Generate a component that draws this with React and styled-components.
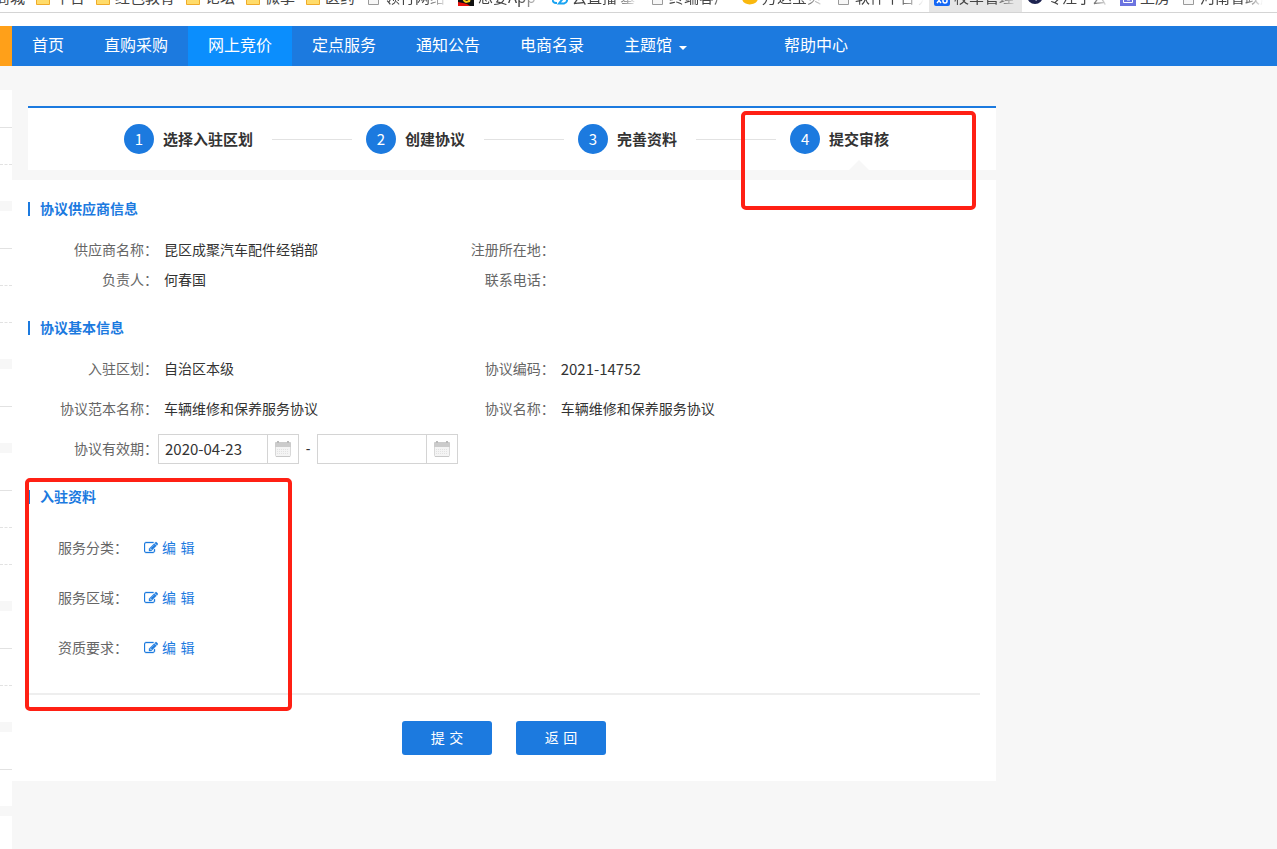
import React from 'react';
import styled, { createGlobalStyle, css } from 'styled-components';

const blue = '#1c7adf';
const grey = '#f7f7f7';
const cjk = '"Noto Sans CJK SC", sans-serif';

const GlobalStyle = createGlobalStyle`
  *, *::before, *::after { box-sizing: border-box; }
  body {
    margin: 0;
    background: ${grey};
    color: #333;
    font: 14px/20px "Liberation Sans", ${cjk};
  }
  button, input { font: inherit; color: inherit; }
`;

const Page = styled.div`
  display: flex;
  flex-direction: column;
  min-height: 100vh;
`;

/* Bookmarks */
const Bookmarks = styled.nav`
  display: flex;
  align-items: flex-end;
  height: 13px;
  overflow: hidden;
  background: #fff;
  border-bottom: 1px solid #d4d4d4;
`;
const Bookmark = styled.a`
  flex: none;
  display: flex;
  align-items: center;
  justify-content: flex-end;
  gap: 4px;
  width: ${p => (p.$cut ? '30px' : 'auto')};
  height: 30px;
  padding: 0 5px;
  color: #444;
  font: 15px/22px ${cjk};
  text-decoration: none;
  white-space: nowrap;
  background: ${p => (p.$on ? '#e6e6e6' : 'transparent')};
`;
const BookmarkText = styled.span`
  width: ${p => p.$w}px;
  overflow: hidden;
  white-space: nowrap;
  ${p => p.$w > 60 && css`mask-image: linear-gradient(to right, #000 42px, transparent);`}
`;

const bookmarks = [
  ['folder', '平台', 30],
  ['folder', '红色教育', 60],
  ['folder', '论坛', 30],
  ['folder', '微享', 30],
  ['folder', '医药', 30],
  ['page', '领行网络', 63],
  ['fire', '想要App', 64],
  ['cloud', '云直播 基', 67],
  ['page', '终端客户', 63],
  ['gold', '万达宝贝', 63],
  ['page', '软件平台 万', 69],
  ['school', '校车管理平', 63, true],
  ['globe', '专注于云', 63],
  ['house', '上房', 30],
  ['page', '河南省政府', 63],
];

const marks = {
  folder: <path d="M1.5 2.5h5l1.5 2h6.500v11h-13z" fill="#ffdc6b" stroke="#f0ab2a" />,
  page: <path d="M3.500 1.500h10v14h-10z" fill="#f7f7f7" stroke="#9a9a9a" />,
  fire: (
    <>
      <path d="M0 0h16v17H0z" fill="#111" />
      <path d="M0 13l5 1 4 1 3 2H0z" fill="#e8100c" />
      <path d="M4 10l5 2 4-3-1 4-4 1-2-1z" fill="#ffd21c" />
    </>
  ),
  cloud: (
    <path d="M5 14H4a3 3 0 0 1 0-7c1-5 8-5 9 0a4 4 0 0 1-1 7.500H7l4-5" fill="none" stroke="#1aa4f2" strokeWidth="2" />
  ),
  gold: <path d="M0 9h16c0 8-16 9-16 0z" fill="#f9b80e" />,
  school: (
    <>
      <rect width="16" height="17" rx="2" fill="#1467f5" />
      <path d="M3 14l4-5M3 9l4 5M9 8v4q0 2 2 2t2-2V8" fill="none" stroke="#fff" strokeWidth="1.500" />
    </>
  ),
  globe: (
    <>
      <circle cx="8" cy="7" r="8" fill="#1d2350" />
      <path d="M5 11l2-3m2 4l1-4" stroke="#c4c7dd" />
    </>
  ),
  house: (
    <>
      <path d="M0 0h16v17H0z" fill="#6c74e0" />
      <path d="M3.500 3.500h9v10h-9zM7 7v4h3V7z" fill="none" stroke="#fff" />
    </>
  ),
};

/* Site navigation */
const NavBar = styled.nav`
  display: flex;
  height: 40px;
  margin-top: 13px;
  background: ${blue};
  border-left: 12px solid #ffa019;
`;
const TopWhite = styled.header`
  display: flow-root;
  background: #fff;
`;
const NavLink = styled.a`
  display: flex;
  align-items: center;
  gap: 7px;
  padding: 0 20px;
  margin-left: ${p => (p.$apart ? 57 : 0)}px;
  background: ${p => (p.$on ? '#0b8efd' : 'transparent')};
  color: #fff;
  font-size: 16px;
  text-decoration: none;
  white-space: nowrap;
`;
const Caret = styled.span`
  border: 4px solid transparent;
  border-top-color: #fff;
  border-bottom: 0;
  margin-top: 3px;
`;

/* Left strip */
const Body = styled.div`
  display: flex;
  flex: 1;
`;
const Side = styled.aside`
  flex: none;
  display: flex;
  flex-direction: column;
  gap: 10px;
  width: 12px;
  padding-top: 24px;
`;
const SideGroup = styled.div`
  background: #fff;
  &:last-child { flex: 1; }
`;
const SideRow = styled.div`
  height: 37px;
  & + & { border-top: 1px dashed #e2e2e2; }
  &:first-child + & { border-top-style: solid; }
`;

/* Main */
const Main = styled.main`
  position: relative;
  flex: 1;
  max-width: 984px;
  padding-top: 40px;
`;
const Steps = styled.ol`
  display: flex;
  align-items: center;
  height: 64px;
  margin: 0 0 10px 16px;
  padding: 0 0 0 96px;
  list-style: none;
  background: #fff;
  border-top: 2px solid ${blue};
  font-family: ${cjk};
`;
const Step = styled.li`
  display: flex;
  align-items: center;
  gap: 9px;
  height: 100%;
  white-space: nowrap;
  &:not(:last-child)::after {
    content: '';
    width: 80px;
    height: 1px;
    margin: 0 14px 0 10px;
    background: #e2e2e2;
  }
`;
const StepNumber = styled.span`
  width: 30px;
  height: 30px;
  border-radius: 50%;
  background: ${blue};
  color: #fff;
  font-size: 15px;
  line-height: 30px;
  text-align: center;
`;
const StepName = styled.strong`
  position: relative;
  font-size: 15px;
  line-height: 62px;
  ${p => p.$on && css`
    &::after {
      content: '';
      position: absolute;
      left: 50%;
      bottom: 0;
      margin-left: -10px;
      border: 10px solid transparent;
      border-top: 0;
      border-bottom-color: ${grey};
    }
  `}
`;

const Panel = styled.form`
  padding: 19px 16px 26px;
  background: #fff;
`;
const Section = styled.section`
  & + & { margin-top: 23px; }
`;
const Title = styled.h2`
  display: flex;
  align-items: center;
  gap: 10px;
  margin: 0 0 ${p => p.$space || 16}px;
  color: ${blue};
  font-size: 14px;
  line-height: 20px;
  &::before {
    content: '';
    width: 2px;
    height: 14px;
    background: ${blue};
  }
`;
const Fields = styled.div`
  display: grid;
  grid-template-columns: 5fr 7fr;
  row-gap: ${p => p.$gap || 0}px;
`;
const Field = styled.div`
  display: flex;
  align-items: center;
  height: 30px;
  ${p => p.$wide && 'grid-column: 1 / -1;'}
`;
const Label = styled.label`
  width: 130px;
  color: #666;
  text-align: right;
`;
const Value = styled.output`
  padding-left: 6px;
  ${p => p.$code && css`
    font-family: ${cjk};
    font-size: 15px;
    line-height: 18px;
  `}
`;
const DateBox = styled.div`
  display: flex;
  width: 141px;
  height: 30px;
  border: 1px solid #d4d4d4;
`;
const DateInput = styled.input`
  flex: 1;
  min-width: 0;
  padding: 0 6px;
  border: 0;
  outline: 0;
  background: transparent;
  font-family: ${cjk};
  font-size: 15px;
`;
const DateButton = styled.button`
  display: flex;
  align-items: center;
  justify-content: center;
  width: 31px;
  padding: 0;
  border: 0;
  border-left: 1px solid #d4d4d4;
  background: #fff;
`;
const Dash = styled.span`
  width: 18px;
  text-align: center;
`;

const Materials = styled.ul`
  display: grid;
  gap: 20px;
  margin: 0;
  padding: 0 0 30px 30px;
  list-style: none;
  border-bottom: 2px solid #eee;
`;
const Material = styled.li`
  display: flex;
  align-items: center;
  gap: 16px;
  height: 30px;
  color: #666;
`;
const EditLink = styled.a`
  display: flex;
  align-items: center;
  gap: 4px;
  color: ${blue};
  font-family: "DejaVu Sans", ${cjk};
  text-decoration: none;
`;
const Actions = styled.div`
  display: flex;
  justify-content: center;
  gap: 24px;
  margin-top: 26px;
`;
const Button = styled.button`
  width: 90px;
  height: 34px;
  padding: 0;
  border: 0;
  border-radius: 3px;
  background: ${blue};
  color: #fff;
  font-family: "DejaVu Sans", ${cjk};
`;
const Highlight = styled.div`
  position: absolute;
  left: ${p => p.$x}px;
  top: ${p => p.$y}px;
  width: ${p => p.$w}px;
  height: ${p => p.$h}px;
  border: 4px solid #ff2014;
  border-radius: 5px;
  pointer-events: none;
`;

const EditIcon = () => (
  <svg width="14" height="14" viewBox="0 0 1792 1792" fill="currentColor" stroke="currentColor" strokeWidth="40" aria-hidden="true">
    <path d="M888 1184l116-116-152-152-116 116v56h96v96h56zm440-720q-16-16-33 1l-350 350q-17 17-1 33t33-1l350-350q17-17 1-33zm80 594v190q0 119-84.5 203.5t-203.5 84.5h-832q-119 0-203.5-84.5t-84.5-203.5v-832q0-119 84.5-203.5t203.5-84.5h832q63 0 117 25 15 7 18 23 3 17-9 29l-49 49q-14 14-32 8-23-6-45-6h-832q-66 0-113 47t-47 113v832q0 66 47 113t113 47h832q66 0 113-47t47-113v-126q0-13 9-22l64-64q15-15 35-7t20 29zm-96-738l288 288-672 672h-288v-288zm444 132l-92 92-288-288 92-92q28-28 68-28t68 28l152 152q28 28 28 68t-28 68z" />
  </svg>
);

const CalendarIcon = () => (
  <svg width="16" height="16" viewBox="0 0 16 16" aria-hidden="true">
    <rect x="0.5" y="1.5" width="15" height="14" rx="1" fill="#f4f4f4" stroke="#d8d8d8" />
    <path d="M0 2q0-1 1-1h14q1 0 1 1v4H0z" fill="#cbcbcb" />
    <path d="M2 0h2v2H2zM12 0h2v2h-2z" fill="#b9b9b9" />
    <path d="M2 8.500h12M2 10.500h12M2 12.500h12" stroke="#e2e2e2" strokeDasharray="1 1" />
    <path d="M1 15.500h14" stroke="#c8c8c8" />
  </svg>
);

const DateField = ({ id, name, value }) => (
  <DateBox>
    <DateInput id={id} aria-label={name} defaultValue={value} />
    <DateButton type="button" aria-label={`选择${name}`}><CalendarIcon /></DateButton>
  </DateBox>
);

const InfoField = ({ id, label, value, code }) => (
  <Field>
    <Label htmlFor={id}>{label}：</Label>
    <Value id={id} $code={code}>{value}</Value>
  </Field>
);

const navItems = ['首页', '直购采购', '网上竞价', '定点服务', '通知公告', '电商名录', '主题馆', '帮助中心'];
const sideGroups = [3, 4, 2, 4, 3, 2, 0];
const steps = ['选择入驻区划', '创建协议', '完善资料', '提交审核'];
const materials = ['服务分类', '服务区域', '资质要求'];

export default function App() {
  return (
    <Page>
      <GlobalStyle />
      <TopWhite>
        <Bookmarks>
          <Bookmark href="#" $cut>
            <span>商城</span>
          </Bookmark>
          {bookmarks.map(([icon, text, w, on]) => (
            <Bookmark key={text} href="#" $on={on}>
              <svg width="16" height="17" viewBox="0 0 16 17" aria-hidden="true">{marks[icon]}</svg>
              <BookmarkText $w={w}>{text}</BookmarkText>
            </Bookmark>
          ))}
        </Bookmarks>
        <NavBar>
          {navItems.map(name => (
            <NavLink key={name} href="#" $on={name === '网上竞价'} $apart={name === '帮助中心'}>
              {name}
              {name === '主题馆' && <Caret />}
            </NavLink>
          ))}
        </NavBar>
      </TopWhite>
      <Body>
        <Side>
          {sideGroups.map((count, i) => (
            <SideGroup key={i}>
              {Array.from({ length: count }, (_, j) => <SideRow key={j} />)}
            </SideGroup>
          ))}
        </Side>
        <Main>
          <Steps>
            {steps.map((name, i) => (
              <Step key={name}>
                <StepNumber>{i + 1}</StepNumber>
                <StepName $on={i === 3}>{name}</StepName>
              </Step>
            ))}
          </Steps>
          <Panel onSubmit={e => e.preventDefault()}>
            <Section>
              <Title>协议供应商信息</Title>
              <Fields>
                <InfoField id="supplier" label="供应商名称" value="昆区成聚汽车配件经销部" />
                <InfoField id="place" label="注册所在地" />
                <InfoField id="owner" label="负责人" value="何春国" />
                <InfoField id="phone" label="联系电话" />
              </Fields>
            </Section>
            <Section>
              <Title>协议基本信息</Title>
              <Fields $gap={10}>
                <InfoField id="region" label="入驻区划" value="自治区本级" />
                <InfoField id="code" label="协议编码" value="2021-14752" code />
                <InfoField id="template" label="协议范本名称" value="车辆维修和保养服务协议" />
                <InfoField id="agreement" label="协议名称" value="车辆维修和保养服务协议" />
                <Field $wide>
                  <Label htmlFor="start">协议有效期：</Label>
                  <DateField id="start" name="开始日期" value="2020-04-23" />
                  <Dash>-</Dash>
                  <DateField id="end" name="结束日期" value="" />
                </Field>
              </Fields>
            </Section>
            <Section>
              <Title $space={26}>入驻资料</Title>
              <Materials>
                {materials.map(name => (
                  <Material key={name}>
                    <span>{name}：</span>
                    <EditLink href="#"><EditIcon />编 辑</EditLink>
                  </Material>
                ))}
              </Materials>
            </Section>
            <Actions>
              <Button type="submit">提 交</Button>
              <Button type="button">返 回</Button>
            </Actions>
          </Panel>
          <Highlight $x={729} $y={45} $w={235} $h={99} />
          <Highlight $x={13} $y={412} $w={267} $h={233} />
        </Main>
      </Body>
    </Page>
  );
}
